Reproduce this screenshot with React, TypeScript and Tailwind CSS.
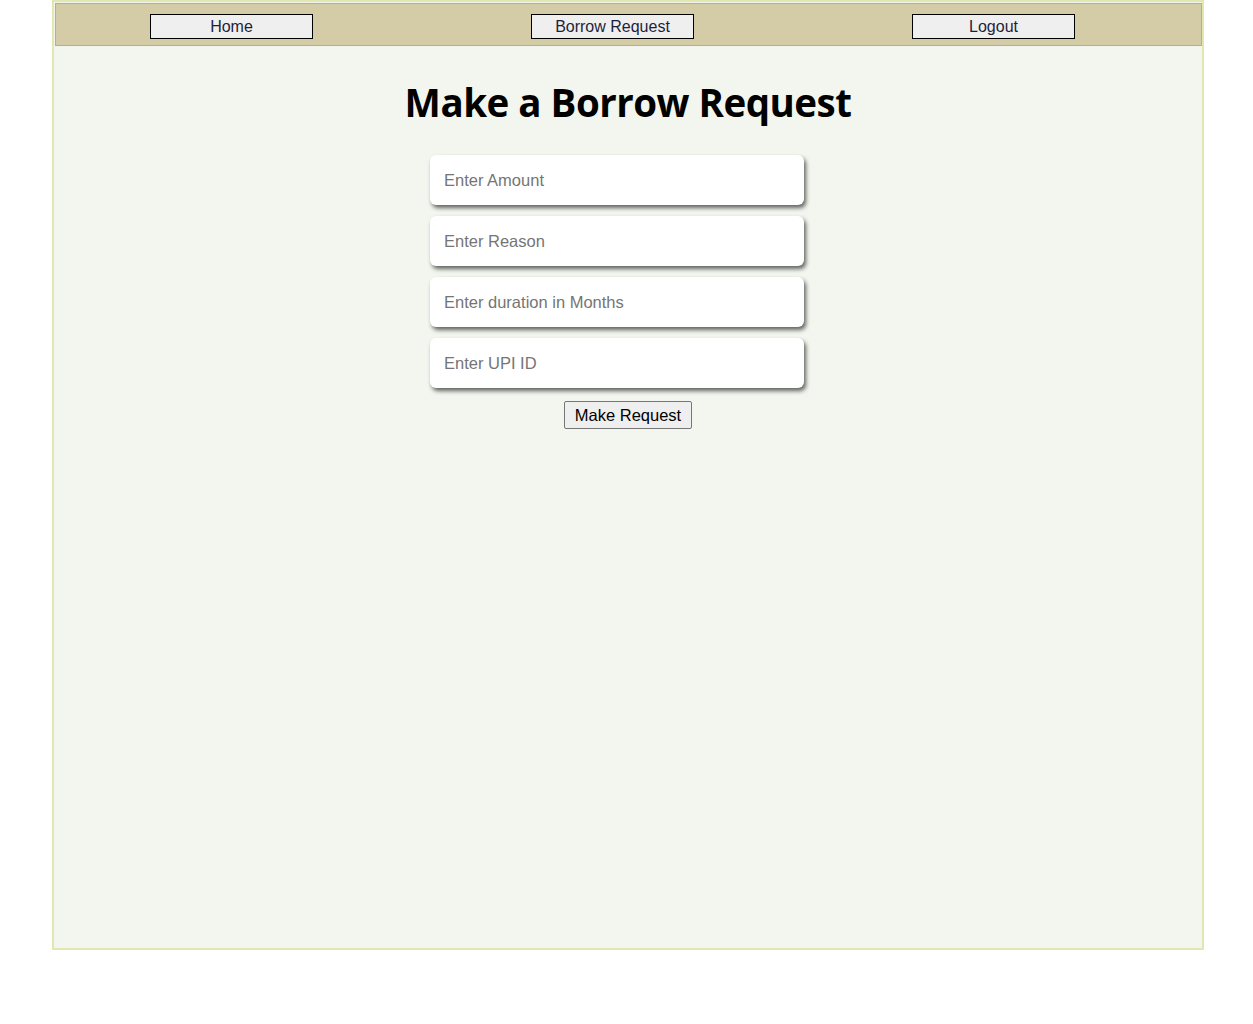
export default function App() {
  const fields = ['Enter Amount', 'Enter Reason', 'Enter duration in Months', 'Enter UPI ID'];

  return (
    <div className="min-h-screen bg-white font-['Liberation_Sans',Arial,sans-serif]">
      <div className="ml-[52px] h-[950px] w-[1152px] border-2 border-[#e0e8b0] bg-[#f3f6ee]">
        <nav className="ml-px mt-px flex h-[43px] w-[1147px] items-start gap-[218px] border border-[#b0ae9c] bg-[#d3cca6] pl-[94px] pt-[10px]">
          {['Home', 'Borrow Request', 'Logout'].map((label) => (
            <button
              key={label}
              type="button"
              className="h-[25px] w-[163px] border border-black bg-[#efefef] text-[16px] text-[#1e1e3c]"
            >
              {label}
            </button>
          ))}
        </nav>

        <h1 className="mt-[33px] text-center font-['Open_Sans',sans-serif] text-[38.5px] font-bold leading-[46px] tracking-[-0.5px] text-black">
          Make a Borrow Request
        </h1>

        <div className="mt-[30px] flex flex-col items-center">
          <div className="mr-[22px] flex flex-col gap-[11px]">
            {fields.map((ph) => (
              <input
                key={ph}
                type="text"
                placeholder={ph}
                className="h-[50px] w-[374px] rounded-[6px] bg-white px-[14px] text-[16.5px] text-black shadow-[2px_3px_4px_rgba(0,0,0,0.6)] outline-none placeholder:text-[#757575]"
              />
            ))}
          </div>
          <button
            type="button"
            className="mt-[13px] h-[28px] w-[128px] rounded-[2px] border border-[#767676] bg-[#efefef] text-[16.5px] text-black"
          >
            Make Request
          </button>
        </div>
      </div>
    </div>
  );
}
